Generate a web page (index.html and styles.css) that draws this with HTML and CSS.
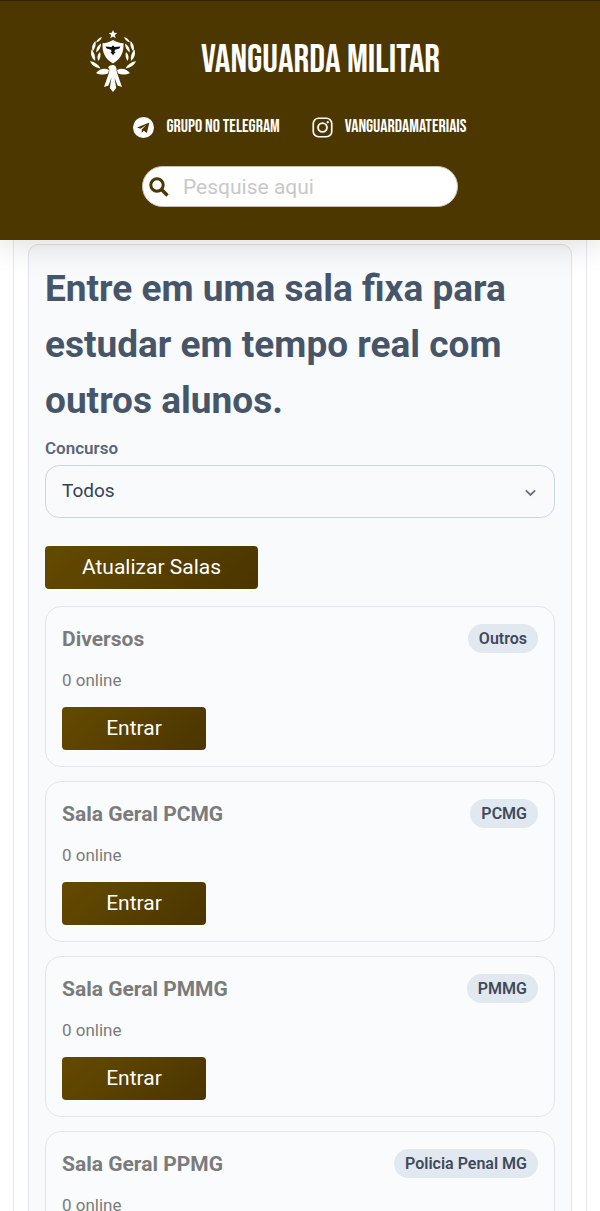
FILE: index.html
```html
<!DOCTYPE html>
<html lang="pt-BR">
<head>
<meta charset="utf-8">
<meta name="viewport" content="width=device-width, initial-scale=1">
<title>Vanguarda Militar</title>
<link rel="stylesheet" href="styles.css">
</head>
<body>
<header class="site-header">
  <div class="brand">
    <svg class="brand-logo" viewBox="0 0 46 62" aria-hidden="true">
      <path fill="#fff" d="M23 0l1.200 2.800 3 .3-2.300 2 .7 3.100-2.600-1.600-2.600 1.600.7-3.100-2.300-2 3-.3z"/>
      <path fill="#fff" d="M23 10c3 2 6.500 3 10.500 3.200.3 9-2 15-10.500 20.300-8.500-5.300-10.800-11.300-10.500-20.300 4-.2 7.500-1.200 10.500-3.200z"/>
      <path fill="#111" d="M15.500 16.500l6 .5.800-1.200h1.400l.8 1.200 6-.5-1.200 2-4.300 1.200-.6 1.800 1.200 1-1.600 1.200-1 1.800-1-1.800-1.600-1.200 1.200-1-.6-1.800-4.300-1.200z"/>
      <g id="laurel" fill="#fff">
        <path d="M12 7c-3 .8-5 2.500-6 5.500 2.800-.8 5-2.500 6-5.500z"/>
        <path d="M5.500 11c-3.500 3.500-4 6.500-2.800 10.500 2.300-3.500 3.600-6.500 2.800-10.500z"/>
        <path d="M11 13.500c-3.500 2-5 5-4.700 9 2.700-2 4.700-5 4.700-9z"/>
        <path d="M1.500 19.500c-1.200 5 0 8.500 3.600 11.500.5-4.500-.6-8.500-3.600-11.500z"/>
        <path d="M10 22c-3 3-3.200 6-1.500 9 2-3 2.500-6 1.500-9z"/>
        <path d="M0 31c1.800 4.500 5 6.500 10.500 7.500-2-4-5.500-6.500-10.500-7.500z"/>
        <path d="M6 43c4 2 8.500 2 12 .5l1-3.500c-5-2.500-9-1-13 3z"/>
      </g>
      <use href="#laurel" transform="translate(46 0) scale(-1 1)"/>
      <path fill="#fff" d="M18 38c1-3.500 6.500-4 8-1 .8 2 .2 4 1.300 6.500L32 57l-4.500-1.500-3-8 1.700 10.500-3.200 4-3.200-4 1.700-10.500-3 8L14 57l4.700-13.500c.7-2 .8-3.500.5-5z"/>
    </svg>
    <h1 class="brand-name">VANGUARDA MILITAR</h1>
  </div>
  <nav class="social" aria-label="Redes sociais">
    <a class="social-link" href="#telegram">
      <svg class="social-icon" viewBox="0 0 20 20" aria-hidden="true">
        <circle cx="10" cy="10" r="10" fill="#fff"/>
        <path fill="#4c3700" d="M15.600 5.200L3.800 9.900l3.300 1.300 5.500-3.700-4.300 4.400v3.300l1.900-2.100 3 2.200z"/>
      </svg>
      <span>GRUPO NO TELEGRAM</span>
    </a>
    <a class="social-link" href="#instagram">
      <svg class="social-icon" viewBox="0 0 20 20" fill="none" stroke="#fff" aria-hidden="true">
        <rect x="1.200" y="1.200" width="17.600" height="17.600" rx="5" stroke-width="1.600"/>
        <circle cx="10" cy="10" r="4.200" stroke-width="1.800"/>
        <circle cx="15" cy="5" r="1.100" fill="#fff" stroke="none"/>
      </svg>
      <span>VANGUARDAMATERIAIS</span>
    </a>
  </nav>
  <form class="search" role="search">
    <button class="search-button" type="button" aria-label="Pesquisar">
      <svg class="search-icon" viewBox="0 0 20 20" fill="none" stroke="#4c3700" aria-hidden="true">
        <circle cx="8" cy="8" r="6.200" stroke-width="3"/>
        <path d="M12.500 12.500l6 6" stroke-width="3.400"/>
      </svg>
    </button>
    <input class="search-input" type="search" placeholder="Pesquise aqui" aria-label="Pesquise aqui">
  </form>
</header>
<main class="content">
  <div class="frame">
    <section class="panel">
      <h2 class="panel-title">Entre em uma sala fixa para estudar em tempo real com outros alunos.</h2>
      <label class="field-label" for="concurso">Concurso</label>
      <div class="select-box">
        <select class="select" id="concurso">
          <option>Todos</option>
          <option>Outros</option>
          <option>PCMG</option>
          <option>PMMG</option>
          <option>Policia Penal MG</option>
        </select>
        <svg class="chevron" viewBox="0 0 10 10" fill="none" stroke="#66707c" stroke-width="1.600" aria-hidden="true"><path d="M.8 3L5 7.200 9.200 3"/></svg>
      </div>
      <button class="button button-refresh" type="button">Atualizar Salas</button>
      <div class="rooms">
        <article class="room">
          <div class="room-head"><h3 class="room-name">Diversos</h3><span class="tag">Outros</span></div>
          <p class="room-online">0 online</p>
          <button class="button" type="button">Entrar</button>
        </article>
        <article class="room">
          <div class="room-head"><h3 class="room-name">Sala Geral PCMG</h3><span class="tag">PCMG</span></div>
          <p class="room-online">0 online</p>
          <button class="button" type="button">Entrar</button>
        </article>
        <article class="room">
          <div class="room-head"><h3 class="room-name">Sala Geral PMMG</h3><span class="tag">PMMG</span></div>
          <p class="room-online">0 online</p>
          <button class="button" type="button">Entrar</button>
        </article>
        <article class="room">
          <div class="room-head"><h3 class="room-name">Sala Geral PPMG</h3><span class="tag">Policia Penal MG</span></div>
          <p class="room-online">0 online</p>
          <button class="button" type="button">Entrar</button>
        </article>
      </div>
    </section>
  </div>
</main>
</body>
</html>
```
FILE: styles.css
```css
* { box-sizing: border-box; }

body {
  display: flex;
  flex-direction: column;
  height: 100vh;
  margin: 0;
  overflow: hidden;
  background: #fff;
  font-family: Roboto, sans-serif;
}

h1, h2, h3, p { margin: 0; }

button, input, select { font-family: inherit; }

.site-header {
  position: relative;
  z-index: 1;
  display: flex;
  flex: none;
  flex-direction: column;
  align-items: center;
  padding: 29px 16px 33px;
  border-top: 1px solid #2f2100;
  background: #4c3700;
  box-shadow: 0 4px 32px rgba(0, 0, 0, 0.14);
}

.brand {
  display: flex;
  align-items: center;
  gap: 65px;
  padding-right: 70px;
}

.brand-logo {
  width: 46px;
  height: 62px;
}

.brand-name {
  color: #fff;
  font-family: "Bebas Neue", "Roboto Condensed", "Liberation Sans Narrow", sans-serif;
  font-size: 39px;
  font-weight: 400;
  line-height: 40px;
  white-space: nowrap;
}

.social {
  display: flex;
  gap: 32px;
  margin-top: 24px;
}

.social-link {
  display: flex;
  align-items: center;
  gap: 12px;
  color: #fff;
  font-family: "Bebas Neue", "Roboto Condensed", "Liberation Sans Narrow", sans-serif;
  font-size: 18px;
  font-weight: 400;
  line-height: 22px;
  text-decoration: none;
  white-space: nowrap;
}

.social-icon {
  width: 21px;
  height: 21px;
}

.search {
  display: flex;
  align-items: center;
  width: 316px;
  max-width: 100%;
  height: 41px;
  margin-top: 28px;
  padding: 0 16px 0 6px;
  border: 1px solid #c9c3b5;
  border-radius: 21px;
  background: #fff;
}

.search-button {
  display: flex;
  padding: 0;
  border: 0;
  background: none;
}

.search-icon {
  width: 20px;
  height: 20px;
}

.search-input {
  flex: 1;
  min-width: 0;
  padding: 0 0 0 14px;
  border: 0;
  outline: 0;
  background: none;
  color: #333;
  font-size: 21px;
  line-height: 28px;
}

.search-input::placeholder { color: #c8c8c8; }

.content {
  flex: 1;
  min-height: 0;
  padding: 0 13px;
  overflow-y: auto;
  scrollbar-width: none;
}

.frame {
  padding: 4px 14px 16px;
  border: solid #e8e9ed;
  border-width: 0 1px;
}

.panel {
  padding: 16px;
  border: 1px solid #dfe3e8;
  border-radius: 10px;
  background: #f9fafc;
}

.panel-title {
  color: #475569;
  font-size: 37px;
  font-weight: 700;
  line-height: 56px;
}

.field-label {
  display: block;
  margin-top: 7px;
  color: #5b6678;
  font-size: 17px;
  font-weight: 600;
  line-height: 24px;
}

.select-box {
  position: relative;
  margin-top: 5px;
}

.select {
  display: block;
  width: 100%;
  height: 53px;
  padding: 0 40px 2px 16px;
  border: 1px solid #cbd5dc;
  border-radius: 14px;
  appearance: none;
  background: #f9fafc;
  color: #334155;
  font-size: 19px;
}

.chevron {
  position: absolute;
  top: 22px;
  right: 19px;
  width: 11px;
  height: 11px;
  pointer-events: none;
}

.button {
  display: block;
  width: 144px;
  height: 43px;
  padding: 0 0 2px;
  border: 0;
  border-radius: 4px;
  background: linear-gradient(135deg, #644a00, #4b3500);
  color: #fff;
  font-size: 21px;
  line-height: 40px;
}

.button-refresh {
  width: 213px;
  margin-top: 28px;
}

.rooms {
  display: grid;
  gap: 14px;
  margin-top: 17px;
}

.room {
  padding: 17px 16px 16px;
  border: 1px solid #e2e6eb;
  border-radius: 16px;
  background: #fafbfd;
}

.room-head {
  display: flex;
  align-items: center;
  justify-content: space-between;
}

.room-name {
  color: #7b7b7b;
  font-size: 21px;
  font-weight: 700;
  line-height: 28px;
}

.tag {
  padding: 0 11px;
  border-radius: 15px;
  background: #e2e8f0;
  color: #3f4a5a;
  font-size: 16px;
  font-weight: 600;
  line-height: 29px;
}

.room-online {
  margin: 15px 0;
  color: #7b7b7b;
  font-size: 17px;
  line-height: 24px;
}
```
